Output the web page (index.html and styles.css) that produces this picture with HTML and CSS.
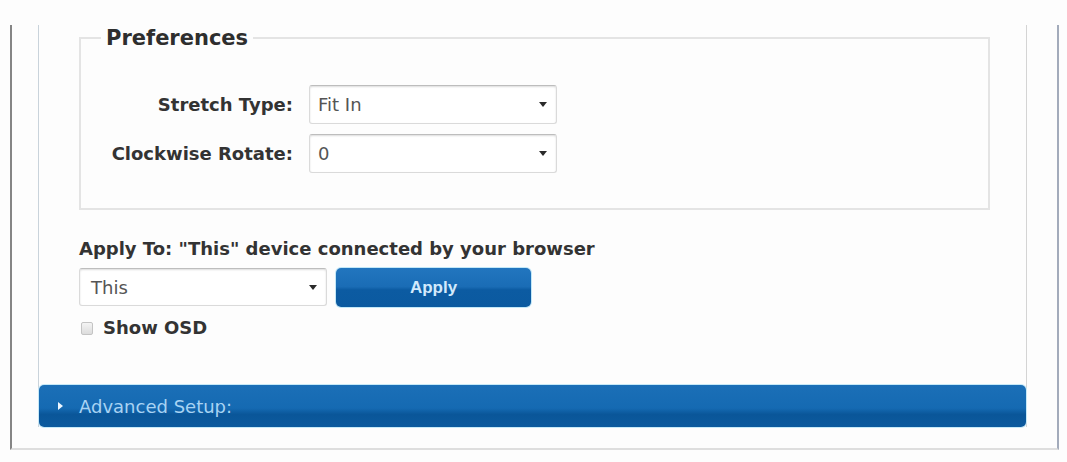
FILE: index.html
```html
<!DOCTYPE html>
<html lang="en">
<head>
<meta charset="utf-8">
<title>Preferences</title>
<link rel="stylesheet" href="styles.css">
</head>
<body>
<div class="frame">
  <div class="panel">
    <div class="panel-body">
      <fieldset class="prefs">
        <legend>Preferences</legend>
        <div class="form-grid">
          <label class="field-label">Stretch Type:</label>
          <div class="select"><span class="select-value">Fit In</span><span class="caret"></span></div>
          <label class="field-label">Clockwise Rotate:</label>
          <div class="select"><span class="select-value">0</span><span class="caret"></span></div>
        </div>
      </fieldset>
      <div class="apply-title">Apply To: "This" device connected by your browser</div>
      <div class="apply-row">
        <div class="select select-target"><span class="select-value">This</span><span class="caret"></span></div>
        <button class="btn-apply" type="button">Apply</button>
      </div>
      <label class="check"><span class="check-box"></span>Show OSD</label>
    </div>
    <div class="adv-bar"><span class="adv-tri"></span>Advanced Setup:</div>
  </div>
</div>
</body>
</html>
```
FILE: styles.css
```css
html, body {
  margin: 0;
  padding: 0;
  background: #fdfdfd;
}
body {
  padding: 10px 0 0 10px;
  font-family: "DejaVu Sans", Verdana, sans-serif;
  color: #363636;
}
.frame {
  box-sizing: border-box;
  width: 1049px;
  border-left: 2px solid #858585;
  border-right: 2px solid #a3abbb;
  border-bottom: 2px solid #dedede;
  padding: 0 0 21px 26px;
}
.panel {
  box-sizing: border-box;
  width: 989px;
  border-left: 1px solid #c9d3db;
  border-right: 1px solid #d4d4d4;
  background: #fdfdfd;
}
.panel-body {
  padding: 0 36px 46px 40px;
}
.prefs {
  margin: 15px 0 0 0;
  padding: 34px 20px 35px 20px;
  border: 2px solid #e4e4e4;
  min-width: 0;
}
.prefs legend {
  padding: 0 5px;
  font-size: 21px;
  line-height: 26px;
  font-weight: bold;
  color: #2e2e2e;
}
.form-grid {
  display: grid;
  grid-template-columns: 192px 248px;
  column-gap: 16px;
  row-gap: 10px;
  align-items: center;
}
.field-label {
  text-align: right;
  font-size: 18px;
  font-weight: bold;
  line-height: 22px;
  color: #333;
  white-space: nowrap;
}
.select {
  box-sizing: border-box;
  height: 39px;
  display: flex;
  align-items: center;
  justify-content: space-between;
  padding: 0 9px 0 8px;
  background: #fff;
  border: 1px solid #dadada;
  border-top-color: #bdbdbd;
  border-radius: 3px;
  box-shadow: inset 0 1px 2px rgba(0, 0, 0, 0.14);
}
.select-value {
  font-size: 18px;
  color: #555;
}
.caret {
  width: 0;
  height: 0;
  border-left: 4px solid transparent;
  border-right: 4px solid transparent;
  border-top: 5px solid #2a2a2a;
}
.apply-title {
  margin-top: 28px;
  font-size: 18px;
  font-weight: bold;
  line-height: 22px;
  color: #333;
  white-space: nowrap;
}
.apply-row {
  margin-top: 8px;
  display: flex;
  align-items: flex-start;
  gap: 9px;
}
.select-target {
  width: 248px;
  height: 38px;
  padding-left: 11px;
}
.btn-apply {
  width: 195px;
  height: 39px;
  border: none;
  border-radius: 5px;
  background: linear-gradient(#2276bf 0%, #1a6cb5 48%, #0c5ba2 56%, #0b5aa0 100%);
  box-shadow: 0 0 0 1px #c2e8f8;
  color: #d3eafc;
  font-family: "Liberation Sans", Arial, sans-serif;
  font-size: 17px;
  font-weight: bold;
  padding: 0;
}
.check {
  margin-top: 10px;
  display: flex;
  align-items: center;
  font-size: 18px;
  font-weight: bold;
  line-height: 22px;
  color: #333;
}
.check-box {
  box-sizing: border-box;
  width: 12px;
  height: 13px;
  margin: 0 10px 0 2px;
  border: 1px solid #c4c4c4;
  border-radius: 2px;
  background: linear-gradient(#f4f4f4, #dcdcdc);
}
.adv-bar {
  height: 42px;
  display: flex;
  align-items: center;
  border-radius: 5px;
  background: linear-gradient(#1b6fb7 0%, #156ab2 55%, #0a5699 70%, #0c5a9e 100%);
  box-shadow: 0 0 0 1px #c6e9f8;
  color: #a8d3f3;
  font-size: 18px;
}
.adv-tri {
  width: 0;
  height: 0;
  margin: 0 16px 0 19px;
  border-top: 4px solid transparent;
  border-bottom: 4px solid transparent;
  border-left: 5px solid #eef7ff;
}
```
